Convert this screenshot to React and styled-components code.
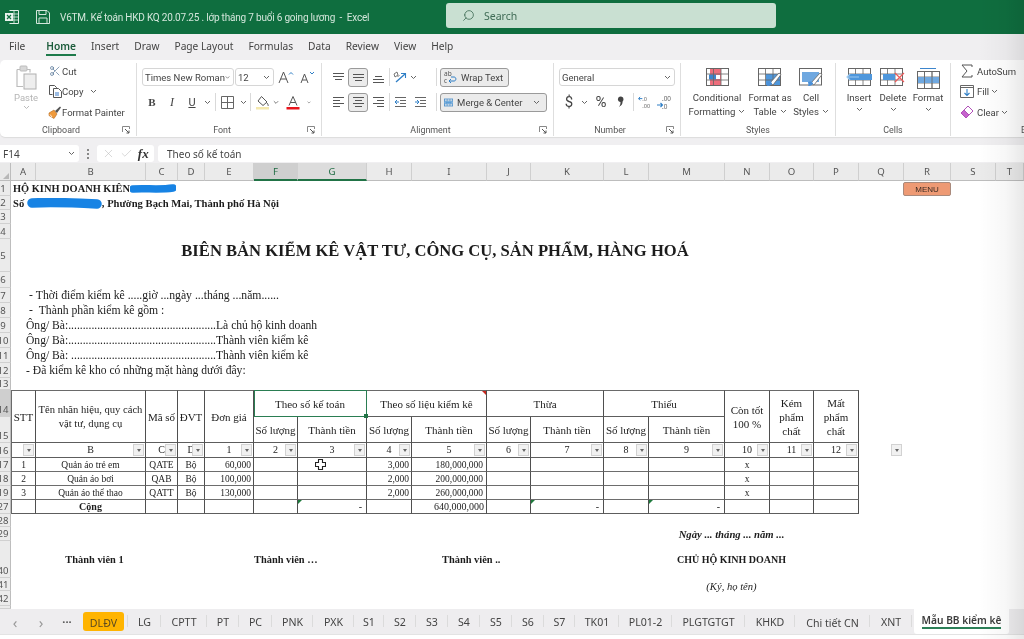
import React from 'react';
import styled, { createGlobalStyle } from 'styled-components';
import { Search, Scissors, X, Check } from 'lucide-react';

const UI = '"Noto Sans", "Open Sans", sans-serif';
const NARROW = 'Roboto, "Noto Sans", sans-serif';
const SERIF = '"Liberation Serif", "Times New Roman", serif';

const Global = createGlobalStyle`
  html, body { margin: 0; padding: 0; background: #fff; }
  * { box-sizing: border-box; }
  body { font-family: ${UI}; color: #333; }
`;

const Window = styled.div`
  position: relative;
  width: 1024px;
  height: 639px;
  overflow: hidden;
  display: flex;
  flex-direction: column;
  background: #f0eff1;
  filter: blur(0.4px);
`;
const EdgeShade = styled.div`
  position: absolute;
  top: 0; right: 0; bottom: 0;
  width: 46px;
  pointer-events: none;
  background: linear-gradient(to right, rgba(0,0,0,0), rgba(0,0,0,.03) 60%, rgba(0,0,0,.09));
`;

/* Title bar */
const TitleBar = styled.header`
  height: 34px;
  flex: none;
  background: #0f6e3f;
  display: flex;
  align-items: center;
  padding-left: 5px;
  color: #d3e6db;
`;
const TitleIcon = styled.div`
  width: ${p => p.$w}px;
  display: flex;
  align-items: center;
`;
const TitleText = styled.div`
  width: 386px;
  font-family: ${NARROW};
  font-size: 10px;
  letter-spacing: -0.2px;
  white-space: pre;
`;
const SearchBox = styled.div`
  width: 330px;
  height: 25px;
  margin-top: -3px;
  background: #c9e0d2;
  border-radius: 3px;
  display: flex;
  align-items: center;
  padding-left: 16px;
  gap: 9px;
  font-size: 10.5px;
  color: #3f6b55;
  svg { transform: scaleX(-1); }
`;

/* Menu */
const MenuBar = styled.nav`
  height: 26px;
  flex: none;
  display: flex;
  align-items: center;
  padding: 0 0 2px 9px;
  font-size: 10.2px;
  color: #444;
`;
const MenuItem = styled.div`
  position: relative;
  margin-right: ${p => p.$gap}px;
  font-weight: ${p => (p.$active ? 600 : 400)};
  color: ${p => (p.$active ? '#1c5c3b' : '#444')};
  ${p => p.$active && `
    &::after {
      content: '';
      position: absolute;
      left: 0; right: 0; bottom: -3px;
      height: 2px;
      background: #1e7a4b;
    }
  `}
`;

/* Ribbon */
const Ribbon = styled.section`
  height: 77px;
  flex: none;
  background: #fff;
  border-radius: 5px 0 0 5px;
  box-shadow: 0 1px 1px #dcdcdc;
  display: flex;
  padding: 3px 0 1px;
  overflow: hidden;
  font-family: ${NARROW};
  font-size: 9.5px;
  color: #444;
`;
const Group = styled.div`
  width: ${p => p.$w}px;
  flex: none;
  display: flex;
  flex-direction: column;
  border-right: ${p => (p.$last ? 'none' : '1px solid #dedede')};
`;
const GroupBody = styled.div`
  flex: 1;
  display: flex;
  padding-left: ${p => p.$pl || 0}px;
  padding-top: 2px;
`;
const GroupFoot = styled.div`
  height: 13px;
  display: flex;
  align-items: center;
  font-size: 8.9px;
  color: #555;
`;
const GroupName = styled.div`
  flex: 1;
  text-align: center;
  padding-left: ${p => p.$pl || 0}px;
  white-space: nowrap;
`;
const Launcher = styled.div`
  width: 14px;
  display: flex;
  align-items: center;
`;

const PasteCol = styled.div`
  width: 48px;
  padding-left: 14px;
  display: flex;
  flex-direction: column;
  align-items: flex-start;
  color: #b5b5b5;
  font-size: 9.5px;
  line-height: 12px;
`;
const PasteLabel = styled.div`
  margin-top: 1px;
  width: 24px;
  text-align: center;
`;
const PasteChev = styled.div`
  width: 24px;
  display: flex;
  justify-content: center;
  margin-top: 1px;
`;
const SmallStack = styled.div`
  display: flex;
  flex-direction: column;
  gap: 8px;
`;
const SmallBtn = styled.div`
  height: 12.5px;
  display: flex;
  align-items: center;
  white-space: nowrap;
  font-size: 9.5px;
  color: #444;
`;
const SmallIcon = styled.span`
  width: ${p => p.$w || 14}px;
  display: inline-flex;
  justify-content: center;
  align-items: center;
  margin-right: ${p => p.$mr || 0}px;
`;
const Stack2 = styled.div`
  display: flex;
  flex-direction: column;
  gap: 7px;
  padding-top: 3px;
`;
const Row = styled.div`
  height: 18px;
  display: flex;
  align-items: center;
`;
const Slot = styled.div`
  width: ${p => p.$w}px;
  height: 19px;
  flex: none;
  display: flex;
  align-items: center;
  justify-content: center;
  font-family: ${p => (p.$serif ? SERIF : 'inherit')};
  font-weight: ${p => (p.$bold ? 700 : 400)};
  font-style: ${p => (p.$it ? 'italic' : 'normal')};
  text-decoration: ${p => (p.$under ? 'underline' : 'none')};
  font-size: ${p => p.$fs || 11}px;
  color: #444;
  ${p => p.$pressed && `
    background: #ebebeb;
    border: 1px solid #9a9a9a;
    border-radius: 3px;
  `}
`;
const Sep = styled.div`
  width: 1px;
  height: 18px;
  flex: none;
  background: #d9d9d9;
  margin: 0 ${p => p.$m || 0}px;
`;
const Combo = styled.div`
  width: ${p => p.$w}px;
  height: 18px;
  flex: none;
  margin-right: 1px;
  background: #fff;
  border: 1px solid #d6d6d6;
  border-radius: 3px;
  display: flex;
  align-items: center;
  justify-content: space-between;
  padding: 0 3px 0 2px;
  font-size: 9.5px;
  color: #444;
  white-space: nowrap;
`;
const ToggleBtn = styled.div`
  width: ${p => p.$w}px;
  height: 19px;
  background: #ebebeb;
  border: 1px solid #9a9a9a;
  border-radius: 3px;
  display: flex;
  align-items: center;
  gap: 4px;
  padding-left: 3px;
  font-size: 9.5px;
  color: #444;
  white-space: nowrap;
`;
const BigBtn = styled.div`
  width: ${p => p.$w}px;
  flex: none;
  display: flex;
  flex-direction: column;
  align-items: center;
  text-align: center;
  font-size: 9.6px;
  line-height: 13px;
  color: #444;
  white-space: nowrap;
  padding-top: 3px;
`;
const BigIcon = styled.div`
  height: 23px;
  display: flex;
  align-items: flex-start;
`;
const BigChev = styled.div`
  height: 11px;
  display: flex;
  align-items: center;
`;
const Chev2 = styled.span`
  display: inline-block;
  margin-left: 3px;
  vertical-align: 1px;
`;

/* Formula bar */
const FormulaBar = styled.div`
  height: 17px;
  flex: none;
  margin: 8px 0 1px;
  display: flex;
  align-items: stretch;
  font-size: 10px;
  color: #444;
`;
const NameBox = styled.div`
  width: 79px;
  background: #fff;
  border-radius: 0 3px 3px 0;
  display: flex;
  align-items: center;
  justify-content: space-between;
  padding: 0 4px 0 3px;
`;
const Dots = styled.div`
  width: 18px;
  display: flex;
  flex-direction: column;
  align-items: center;
  justify-content: center;
  gap: 2px;
  i { width: 2px; height: 2px; background: #888; display: block; }
`;
const FxBox = styled.div`
  width: 57px;
  background: #fff;
  border-radius: 3px;
  display: flex;
  align-items: center;
  justify-content: space-around;
  padding: 0 3px;
  color: #b8b8b8;
  b { font-family: ${SERIF}; font-style: italic; font-size: 13px; color: #333; }
`;
const FormulaInput = styled.div`
  flex: 1;
  margin-left: 4px;
  background: #fff;
  border-radius: 3px 0 0 3px;
  display: flex;
  align-items: center;
  padding-left: 9px;
  font-size: 10px;
`;

/* Sheet */
const COLS = [25,110,32,27,49,44,69,45,75,44,73,45,76,45,44,45,45,47,45,28];
const COLNAMES = 'ABCDEFGHIJKLMNOPQRST'.split('');
const ROWS = [
  [1,15],[2,14],[3,14],[4,15],[5,33],[6,16],[7,15],[8,15],[9,15],[10,15],[11,15],[12,15],[13,12],
  [14,27],[15,26],[16,15],[17,14],[18,14],[19,14],[27,14],[28,13],[29,14],[40,37],[41,13],[42,15],[43,3],
];
const rowLine = r => ROWS.findIndex(x => x[0] === r) + 2;

const Sheet = styled.main`
  height: 446px;
  flex: none;
  display: grid;
  grid-template-columns: 11px ${COLS.map(c => c + 'px').join(' ')};
  grid-template-rows: 18px ${ROWS.map(r => r[1] + 'px').join(' ')};
  background: #fff;
  overflow: hidden;
`;
const Corner = styled.div`
  background: #e9e9e9;
  border-right: 1px solid #bdbdbd;
  border-bottom: 1px solid #bdbdbd;
  position: relative;
  &::after {
    content: '';
    position: absolute;
    right: 1px; bottom: 1px;
    border: 3.5px solid transparent;
    border-right-color: #b8b8b8;
    border-bottom-color: #b8b8b8;
  }
`;
const ColHead = styled.div`
  background: ${p => (p.$sel === 'F' ? '#cfcfcf' : p.$sel ? '#dcdcdc' : '#ebebeb')};
  border-right: 1px solid #cfcfcf;
  border-bottom: ${p => (p.$sel ? '2px solid #217346' : '1px solid #bdbdbd')};
  display: flex;
  align-items: center;
  justify-content: center;
  font-size: 9.6px;
  color: ${p => (p.$sel ? '#1e6b42' : '#555')};
`;
const RowHead = styled.div`
  grid-column: 1;
  grid-row: ${p => rowLine(p.$r)};
  background: ${p => (p.$sel ? '#cfcfcf' : '#ebebeb')};
  border-right: 1px solid #bdbdbd;
  border-bottom: 1px solid #d0d0d0;
  display: flex;
  align-items: ${p => (p.$bot ? 'flex-end' : 'center')};
  justify-content: center;
  overflow: hidden;
  padding-right: 4px;
  font-size: 9.6px;
  line-height: 13px;
  color: #555;
`;
const Cell = styled.div`
  grid-column: ${p => p.$c + 1} / span ${p => p.$cs || 1};
  grid-row: ${p => rowLine(p.$r)} / span ${p => p.$rs || 1};
  display: flex;
  align-items: ${p => p.$a || 'center'};
  justify-content: ${p => p.$j || 'flex-start'};
  padding-left: ${p => p.$pl || 0}px;
  padding-top: ${p => p.$pt || 0}px;
  padding-bottom: ${p => p.$pb || 0}px;
  white-space: nowrap;
  font-family: ${SERIF};
  font-size: ${p => p.$fs || 11}px;
  font-weight: ${p => (p.$b ? 700 : 400)};
  font-style: ${p => (p.$it ? 'italic' : 'normal')};
  color: #1c1c1c;
`;
const Sketch = styled.svg`
  display: inline-block;
  flex: none;
`;
const MenuButton = styled.div`
  grid-column: 19;
  grid-row: ${() => rowLine(1)};
  background: #ee9a74;
  border: 1px solid #a98a7c;
  border-radius: 2px;
  display: flex;
  align-items: center;
  justify-content: center;
  font-family: "Liberation Sans", sans-serif;
  font-size: 8px;
  color: #3a2a22;
  margin: 1px 0 0 -1px;
`;
const T = styled(Cell)`
  position: relative;
  text-align: center;
  line-height: 14px;
  padding-right: ${p => p.$pr || 0}px;
  border-right: 1px solid #4f4f4f;
  border-bottom: 1px solid ${p => p.$hb || '#5d5d5d'};
  ${p => p.$top && 'border-top: 1px solid #6a6a6a;'}
  ${p => p.$left && 'border-left: 1px solid #6a6a6a;'}
  ${p => p.$sel && `
    outline: 1.5px solid #2a7d52;
    outline-offset: -1px;
    z-index: 2;
    &::after {
      content: '';
      position: absolute;
      right: -2px; bottom: -2px;
      width: 4px; height: 4px;
      background: #217346;
    }
  `}
  ${p => p.$green && `
    &::before {
      content: '';
      position: absolute;
      left: 0; top: 0;
      border: 2.5px solid transparent;
      border-left-color: #1e7a3c;
      border-top-color: #1e7a3c;
    }
  `}
  ${p => p.$red && `
    &::before {
      content: '';
      position: absolute;
      right: 0; top: 0;
      border: 2.5px solid transparent;
      border-right-color: #c8281e;
      border-top-color: #c8281e;
    }
  `}
`;
const HeadLines = styled.div`
  font-size: ${p => p.$fs || 11}px;
`;
const FilterBtn = styled.span`
  position: absolute;
  right: ${p => p.$r || 1}px;
  top: 1px;
  width: 11px;
  height: 12px;
  background: #f1f1f1;
  border: 1px solid #d2d2d2;
  display: flex;
  align-items: center;
  justify-content: center;
  &::after {
    content: '';
    border: 2px solid transparent;
    border-top: 3px solid #666;
    border-bottom: 0;
  }
`;
const LooseFilter = styled(Cell)`
  position: relative;
`;

/* Tabs */
const TabBar = styled.footer`
  height: 26px;
  flex: none;
  display: flex;
  align-items: stretch;
  font-size: 10.6px;
  color: #444;
  background: #eeedef;
  border-bottom: 1px solid #e3e3e3;
`;
const TabNav = styled.div`
  width: 83px;
  display: flex;
  align-items: center;
  padding-left: 2px;
  color: #888;
`;
const NavSlot = styled.div`
  width: 26px;
  display: flex;
  justify-content: center;
  font-size: ${p => p.$fs || 15}px;
  line-height: 14px;
  font-weight: ${p => (p.$b ? 700 : 400)};
  color: ${p => p.$c || '#999'};
`;
const Tab = styled.div`
  width: ${p => p.$w}px;
  flex: none;
  display: flex;
  align-items: center;
  justify-content: center;
  position: relative;
  white-space: nowrap;
  padding-top: ${p => (p.$drop ? 3 : 1)}px;
  &::after {
    content: '';
    position: absolute;
    right: 0; top: 6px; bottom: 7px;
    width: 1px;
    background: #dbdbdb;
  }
`;
const OrangeTab = styled.div`
  width: 45px;
  flex: none;
  display: flex;
  align-items: center;
  position: relative;
  &::after {
    content: '';
    position: absolute;
    right: 0; top: 6px; bottom: 7px;
    width: 1px;
    background: #dbdbdb;
  }
`;
const OrangePill = styled.div`
  width: 41px;
  height: 19px;
  margin-top: -1px;
  background: #ffb400;
  border-radius: 3px;
  display: flex;
  align-items: flex-end;
  justify-content: center;
  padding-bottom: 1px;
  color: #5b4a20;
`;
const ActiveTab = styled.div`
  width: 95px;
  margin-left: 2px;
  flex: none;
  background: #fff;
  display: flex;
  align-items: center;
  justify-content: center;
  border-radius: 0 0 3px 3px;
  font-weight: 600;
  font-size: 10.2px;
  color: #3c3c3c;
`;
const ActiveLabel = styled.span`
  border-bottom: 2px solid #2c8058;
  line-height: 13px;
`;
const BottomEdge = styled.div`
  flex: 1;
  background: #fff;
`;

/* Icon pieces */
const Chev = ({ c = '#666' }) => (
  <svg width="7" height="5" viewBox="0 0 7 5"><path d="M1 1l2.5 2.5L6 1" fill="none" stroke={c} strokeWidth="1" /></svg>
);
const Lines = ({ w }) => (
  <svg width="13" height="13" viewBox="0 0 13 13">
    {w.map(([x1, x2, y], i) => <path key={i} d={`M${x1} ${y}H${x2}`} stroke="#555" strokeWidth="1" />)}
  </svg>
);
const VTop = () => <Lines w={[[1,12,2.5],[1,12,5.5],[3,10,8.5]]} />;
const VMid = () => <Lines w={[[1,12,3.5],[1,12,6.5],[3,10,9.5]]} />;
const VBot = () => <Lines w={[[3,10,5.5],[1,12,8.5],[1,12,11.5]]} />;
const HLeft = () => <Lines w={[[1,12,1.5],[1,8,4.5],[1,12,7.5],[1,8,10.5]]} />;
const HCenter = () => <Lines w={[[1,12,1.5],[3,10,4.5],[1,12,7.5],[3,10,10.5]]} />;
const HRight = () => <Lines w={[[1,12,1.5],[5,12,4.5],[1,12,7.5],[5,12,10.5]]} />;
const Launch = () => (
  <svg width="8" height="8" viewBox="0 0 8 8"><path d="M.5 6V.5H7.5V3" fill="none" stroke="#888" strokeWidth="1" /><path d="M3 3l4 4M7 4.5V7H4.5" fill="none" stroke="#555" strokeWidth="1" /></svg>
);
const ExcelLogo = () => (
  <svg width="14" height="16" viewBox="0 0 14 16">
    <path d="M4.5 1.5h9v13h-9" fill="none" stroke="#e2efe8" strokeWidth="1" />
    <path d="M9 1.5v13M4.5 5h9M4.5 8h9M4.5 11h9" stroke="#e2efe8" strokeWidth=".8" />
    <rect x="0" y="4" width="8" height="8" fill="#e9f3ee" />
    <path d="M2 6l4 4M6 6l-4 4" stroke="#0f6e3f" strokeWidth="1.2" />
  </svg>
);
const SaveIcon = () => (
  <svg width="14" height="14" viewBox="0 0 14 14" fill="none" stroke="#d3e6db" strokeWidth="1">
    <path d="M.5.5h10.5l2.5 2.5v10.5H.5z" /><path d="M3 .5v4h7v-4M3 13.5V8h8v5.5" />
  </svg>
);
const PasteIcon = () => (
  <svg width="24" height="26" viewBox="0 0 24 26" fill="none">
    <path d="M3 4.500h3M13 4.500h3v3M3 4.500v17h6" stroke="#bcbcbc" strokeWidth="1.2" />
    <rect x="6" y="1" width="7" height="5" rx="1" fill="#d8d8d8" stroke="#bcbcbc" />
    <rect x="10" y="9" width="12" height="15" fill="#eee" stroke="#b0b0b0" />
  </svg>
);
const CopyIcon = () => (
  <svg width="13" height="13" viewBox="0 0 13 13" fill="none" stroke="#555">
    <path d="M.5.5h5l2 2v1M.5.5v9h3" /><path d="M4.500 3.500h5l3 3v6h-8z" fill="#fff" />
    <path d="M6 8h4M6 10h4" stroke="#3a7bc8" />
  </svg>
);
const PainterIcon = () => (
  <svg width="14" height="14" viewBox="0 0 14 14">
    <path d="M1 8l5-3 3 4-3 4.500-5-3z" fill="#ef9a3c" stroke="#b56a1d" strokeWidth=".6" />
    <path d="M7 6l5-4.500 1 1L9 8" fill="#555" />
    <path d="M2 9.500l2 2.500" stroke="#fff" strokeWidth=".8" />
  </svg>
);
const BigA = ({ dir, size }) => (
  <svg width="16" height="14" viewBox="0 0 16 14">
    <path d={size ? 'M1 13L5.500 2 10 13M2.600 9h5.800' : 'M2 13L5.500 4 9 13M3.200 10h4.600'} fill="none" stroke="#555" strokeWidth="1" />
    <path d={dir === 'up' ? 'M11 4.500l2-2 2 2' : 'M11 2l2 2 2-2'} fill="none" stroke="#2f7fc6" strokeWidth="1" />
  </svg>
);
const BorderIcon = () => (
  <svg width="13" height="13" viewBox="0 0 13 13" fill="none" stroke="#666"><path d="M.5.5h12v12H.5zM6.500.5v12M.5 6.500h12" /></svg>
);
const FillIcon = () => (
  <svg width="13" height="15" viewBox="0 0 13 15">
    <path d="M5.500 1.500L11 7l-4 3.500L2 6z" fill="#fff" stroke="#555" />
    <path d="M11 8c1 1.500 1.500 2.200 1 3" stroke="#555" fill="none" />
    <rect x="0" y="12" width="13" height="2.500" fill="#f4e8ad" />
  </svg>
);
const ColorA = () => (
  <svg width="14" height="15" viewBox="0 0 14 15">
    <path d="M3 10.500L7 1.500l4 9M4.300 7.500h5.400" fill="none" stroke="#555" strokeWidth="1" />
    <rect x="0.500" y="12" width="13" height="2.500" fill="#e8141c" />
  </svg>
);
const OrientIcon = () => (
  <svg width="14" height="14" viewBox="0 0 14 14" fill="none">
    <path d="M1 4l3-2 1 3-3 2zM4.500 7l2-2" stroke="#666" strokeWidth=".9" />
    <path d="M3 12L12 4" stroke="#2f7fc6" strokeWidth="1.300" />
    <path d="M8 3.500h4.500V8" stroke="#2f7fc6" strokeWidth="1.100" />
  </svg>
);
const IndentIcon = ({ rev }) => (
  <svg width="13" height="12" viewBox="0 0 13 12" fill="none">
    <path d="M1 1.500h11M6 4.500h6M6 7.500h6M1 10.500h11" stroke="#666" />
    <path d={rev ? 'M5 6H1M3 4L1 6l2 2' : 'M1 6h4M3 4l2 2-2 2'} stroke="#2f7fc6" />
  </svg>
);
const WrapIcon = () => (
  <svg width="13" height="14" viewBox="0 0 13 14">
    <text x="0" y="6" fontSize="6.5" fontFamily="Noto Sans" fill="#555">ab</text>
    <text x="0" y="13" fontSize="6.5" fontFamily="Noto Sans" fill="#555">c</text>
    <path d="M5 11h5c2.500 0 2.500-4 0-4H7" fill="none" stroke="#2f7fc6" strokeWidth="1" />
    <path d="M7 9l-2 2 2 2" fill="none" stroke="#2f7fc6" strokeWidth="1" />
  </svg>
);
const MergeIcon = () => (
  <svg width="13" height="13" viewBox="0 0 13 13" fill="none">
    <rect x=".5" y="1.500" width="12" height="10" stroke="#2f7fc6" />
    <rect x="1" y="4.500" width="11" height="4" fill="#9cc6ea" />
    <path d="M3 6.500h7M3.500 5.500l-1 1 1 1M9.500 5.500l1 1-1 1M.5 4.500h12M.5 8.500h12M4.500 1.500v3M8.500 1.500v3M4.500 8.500v3M8.500 8.500v3" stroke="#2f7fc6" strokeWidth=".8" />
  </svg>
);
const DecIcon = ({ more }) => (
  <svg width="15" height="15" viewBox="0 0 15 15">
    <text x="5" y="6" fontSize="6.4" fontFamily="Noto Sans" fill="#666">{more ? '.00' : '.0'}</text>
    <text x="5" y="13.5" fontSize="6.4" fontFamily="Noto Sans" fill="#666">{more ? '.0' : '.00'}</text>
    <path d={more ? 'M0 10h5M3.500 8l2 2-2 2' : 'M5 3H1M2.500 1L.5 3l2 2'} fill="none" stroke="#2f7fc6" strokeWidth="1.100" />
  </svg>
);
const CommaIcon = () => (
  <svg width="8" height="12" viewBox="0 0 8 12">
    <circle cx="3.700" cy="3.200" r="2.700" fill="#444" />
    <path d="M4.800 3.500c1.700 2.500.5 6-3 7.500 1.500-1.700 2-3.500 1.500-6z" fill="#444" />
  </svg>
);
const Frame = ({ children, w = 23, h = 18 }) => (
  <svg width={w} height={h} viewBox={`0 0 ${w} ${h}`} fill="none">{children}</svg>
);
const GridLines = ({ x = 0, y = 0, w = 22, h = 17, c = '#666' }) => (
  <>
    <rect x={x + .5} y={y + .5} width={w} height={h} stroke={c} />
    <path d={`M${x + 7.5} ${y}v${h}M${x + 15} ${y}v${h}M${x} ${y + 6}h${w}M${x} ${y + 12}h${w}`} stroke={c} strokeWidth=".8" />
  </>
);
const Brush = () => (
  <g>
    <path d="M12 15l9-10 2 1.500-8 10.500z" fill="#fff" stroke="#666" strokeWidth=".8" />
    <path d="M9 14c2-1 4-.5 5 1 .5 1.500-2 3-5 3 1-1 0-3 0-4z" fill="#4a90d9" />
  </g>
);
const CondIcon = () => (
  <Frame><rect x="4" y="0" width="11" height="17" fill="#ee6e7c" /><rect x="8" y="7" width="6" height="4" fill="#fff" /><rect x="3" y="6.500" width="7" height="5" fill="#3d85cc" /><GridLines /></Frame>
);
const TableIcon = () => (
  <Frame w={25}><path d="M8 6h14.500v11H8z" fill="#4f97dc" /><GridLines /><Brush /></Frame>
);
const StylesIcon = () => (
  <Frame w={25}><rect x=".5" y=".5" width="22" height="16.500" stroke="#666" /><rect x="3" y="4" width="17" height="10" fill="#6fa8e0" /><Brush /></Frame>
);
const InsertIcon = () => (
  <Frame w={26}><GridLines x={2} /><rect x="3" y="6" width="23" height="6" fill="#4f97dc" /><path d="M1 9h12M4 6L1 9l3 3" stroke="#9ccaf2" strokeWidth="1.200" /></Frame>
);
const DeleteIcon = () => (
  <Frame w={26}><GridLines /><rect x="3" y="6" width="12" height="6" fill="#4f97dc" /><path d="M15 5l9 9M24 5l-9 9" stroke="#ee5a5a" strokeWidth="1.200" /></Frame>
);
const FormatIcon = () => (
  <Frame h={21}><path d="M3 .5h16" stroke="#3d85cc" strokeWidth="1.200" /><GridLines y={3} /><rect x="1" y="9" width="21" height="6" fill="#6fa8e0" /><path d="M7.500 3v17M15 3v17" stroke="#666" strokeWidth=".8" /></Frame>
);
const SigmaIcon = () => (
  <svg width="12" height="14" viewBox="0 0 12 14" fill="none"><path d="M11 3V1H1l5 6-5 6h10v-2" stroke="#555" strokeWidth="1" /></svg>
);
const FillDown = () => (
  <svg width="14" height="13" viewBox="0 0 14 13" fill="none">
    <path d="M.5.5h13v12H.5z" stroke="#666" /><path d="M.5 2.500h13" stroke="#666" />
    <path d="M7 4v6M4.500 8L7 10.500 9.500 8" stroke="#2f7fc6" strokeWidth="1.100" />
  </svg>
);
const EraserIcon = () => (
  <svg width="14" height="14" viewBox="0 0 14 14">
    <path d="M8 1l5 5-4 4-5-5z" fill="#fff" stroke="#b14fb9" />
    <path d="M4 5l5 5-3 3-5-5z" fill="#c563cc" stroke="#b14fb9" />
  </svg>
);
const CrossCursor = () => (
  <svg width="11" height="11" viewBox="0 0 11 11">
    <path d="M3.500.5h4v3h3v4h-3v3h-4v-3h-3v-4h3z" fill="#fff" stroke="#222" strokeWidth="1.100" />
  </svg>
);
const Scribble = ({ w, h, d }) => (
  <Sketch width={w} height={h} viewBox={`0 0 ${w} ${h}`}>
    <path d={d} fill="none" stroke="#1783e4" strokeWidth={h - 1.5} strokeLinecap="round" strokeLinejoin="round" />
  </Sketch>
);

/* Data */
const MENU = [['File',21],['Home',15],['Insert',15],['Draw',15],['Page Layout',15],['Formulas',15],['Data',15],['Review',15],['View',15],['Help',0]];
const TABS = [['LG',33],['CPTT',46],['PT',32],['PC',33],['PNK',41],['PXK',41],['S1',30],['S2',32],['S3',32],['S4',32],['S5',32],['S6',32],['S7',31],['TK01',44],['PL01-2',53],['PLGTGTGT',73],['KHKD',50],['Chi tiết CN',75,true],['XNT',42]];
const DATA = [
  [17,'1','Quản áo trẻ em','QATE','60,000','3,000','180,000,000'],
  [18,'2','Quản áo bơi','QAB','100,000','2,000','200,000,000'],
  [19,'3','Quản áo thể thao','QATT','130,000','2,000','260,000,000'],
];
const FILTER = ['', 'B', 'C', 'D', '1', '2', '3', '4', '5', '6', '7', '8', '9', '10', '11', '12'];
const DOTS = '.'.repeat(51);

const Body = () => (
  <>
    {DATA.map(([r, stt, name, code, price, qty, total]) => {
      const hb = '#6d6d6d';
      return (
        <React.Fragment key={r}>
          <T $c={1} $r={r} $left $fs={9.5} $j="center" $hb={hb}>{stt}</T>
          <T $c={2} $r={r} $fs={9.5} $j="center" $hb={hb}>{name}</T>
          <T $c={3} $r={r} $fs={9.5} $j="center" $hb={hb}>{code}</T>
          <T $c={4} $r={r} $fs={9.5} $j="center" $hb={hb}>Bộ</T>
          <T $c={5} $r={r} $fs={9.5} $j="flex-end" $pr={2} $hb={hb}>{price}</T>
          <T $c={6} $r={r} $hb={hb} />
          <T $c={7} $r={r} $pl={17} $hb={hb}>{r === 17 && <CrossCursor />}</T>
          <T $c={8} $r={r} $fs={9.5} $j="flex-end" $pr={2} $hb={hb}>{qty}</T>
          <T $c={9} $r={r} $fs={9.5} $j="flex-end" $pr={3} $hb={hb}>{total}</T>
          {[10, 11, 12, 13].map(c => <T key={c} $c={c} $r={r} $hb={hb} />)}
          <T $c={14} $r={r} $fs={9.5} $j="center" $hb={hb}>x</T>
          <T $c={15} $r={r} $hb={hb} />
          <T $c={16} $r={r} $hb={hb} />
        </React.Fragment>
      );
    })}
  </>
);

export default function App() {
  return (
    <>
      <Global />
      <Window>
        <TitleBar>
          <TitleIcon $w={31}><ExcelLogo /></TitleIcon>
          <TitleIcon $w={24}><SaveIcon /></TitleIcon>
          <TitleText>{'V6TM. Kế toán HKD KQ 20.07.25 . lớp tháng 7 buổi 6 going lương  -  Excel'}</TitleText>
          <SearchBox><Search size={13} strokeWidth={1.5} />Search</SearchBox>
        </TitleBar>

        <MenuBar>
          {MENU.map(([m, g]) => <MenuItem key={m} $gap={g} $active={m === 'Home'}>{m}</MenuItem>)}
        </MenuBar>

        <Ribbon>
          <Group $w={137}>
            <GroupBody>
              <PasteCol>
                <PasteIcon />
                <PasteLabel>Paste</PasteLabel>
                <PasteChev><Chev c="#bbb" /></PasteChev>
              </PasteCol>
              <SmallStack>
                <SmallBtn><SmallIcon $mr={0}><Scissors size={12} strokeWidth={1.2} color="#3a5f86" /></SmallIcon>Cut</SmallBtn>
                <SmallBtn><SmallIcon $mr={0}><CopyIcon /></SmallIcon>Copy<SmallIcon $w={20}><Chev /></SmallIcon></SmallBtn>
                <SmallBtn><SmallIcon $mr={0}><PainterIcon /></SmallIcon>Format Painter</SmallBtn>
              </SmallStack>
            </GroupBody>
            <GroupFoot><GroupName>Clipboard</GroupName><Launcher><Launch /></Launcher></GroupFoot>
          </Group>

          <Group $w={185}>
            <GroupBody $pl={5}>
              <Stack2>
                <Row>
                  <Combo $w={92}>Times New Roman<Chev /></Combo>
                  <Combo $w={39}>12<Chev /></Combo>
                  <Slot $w={21}><BigA dir="up" size /></Slot>
                  <Slot $w={21}><BigA dir="down" /></Slot>
                </Row>
                <Row>
                  <Slot $w={20} $bold $serif $fs={11}>B</Slot>
                  <Slot $w={20} $it $serif $fs={12}>I</Slot>
                  <Slot $w={20} $fs={11} $under>U</Slot>
                  <Slot $w={10}><Chev /></Slot>
                  <Sep $m={3} />
                  <Slot $w={17}><BorderIcon /></Slot>
                  <Slot $w={14}><Chev /></Slot>
                  <Sep />
                  <Slot $w={22}><FillIcon /></Slot>
                  <Slot $w={6}><Chev /></Slot>
                  <Slot $w={28}><ColorA /></Slot>
                  <Slot $w={4}><Chev /></Slot>
                </Row>
              </Stack2>
            </GroupBody>
            <GroupFoot><GroupName>Font</GroupName><Launcher><Launch /></Launcher></GroupFoot>
          </Group>

          <Group $w={232}>
            <GroupBody $pl={6}>
              <Stack2>
                <Row>
                  <Slot $w={20}><VTop /></Slot>
                  <Slot $w={20} $pressed><VMid /></Slot>
                  <Slot $w={21}><VBot /></Slot>
                  <Sep />
                  <Slot $w={19}><OrientIcon /></Slot>
                  <Slot $w={9}><Chev /></Slot>
                  <Slot $w={18} />
                  <Sep />
                  <Slot $w={3} />
                  <ToggleBtn $w={69}><WrapIcon />Wrap Text</ToggleBtn>
                </Row>
                <Row>
                  <Slot $w={20}><HLeft /></Slot>
                  <Slot $w={20} $pressed><HCenter /></Slot>
                  <Slot $w={21}><HRight /></Slot>
                  <Sep />
                  <Slot $w={20}><IndentIcon rev /></Slot>
                  <Slot $w={20}><IndentIcon /></Slot>
                  <Slot $w={6} />
                  <Sep />
                  <Slot $w={3} />
                  <ToggleBtn $w={107}><MergeIcon />Merge &amp; Center<SmallIcon $w={28}><Chev /></SmallIcon></ToggleBtn>
                </Row>
              </Stack2>
            </GroupBody>
            <GroupFoot><GroupName>Alignment</GroupName><Launcher><Launch /></Launcher></GroupFoot>
          </Group>

          <Group $w={127}>
            <GroupBody $pl={5}>
              <Stack2>
                <Row><Combo $w={116}>General<Chev /></Combo></Row>
                <Row>
                  <Slot $w={20} $fs={15}>$</Slot>
                  <Slot $w={10}><Chev /></Slot>
                  <Slot $w={24} $fs={15}>%</Slot>
                  <Slot $w={16}><CommaIcon /></Slot>
                  <Sep $m={4} />
                  <Slot $w={13}><DecIcon /></Slot>
                  <Slot $w={26}><DecIcon more /></Slot>
                </Row>
              </Stack2>
            </GroupBody>
            <GroupFoot><GroupName>Number</GroupName><Launcher><Launch /></Launcher></GroupFoot>
          </Group>

          <Group $w={155}>
            <GroupBody $pl={6}>
              <BigBtn $w={60}><BigIcon><CondIcon /></BigIcon>Conditional<span>Formatting<Chev2><Chev /></Chev2></span></BigBtn>
              <BigBtn $w={46}><BigIcon><TableIcon /></BigIcon>Format as<span>Table<Chev2><Chev /></Chev2></span></BigBtn>
              <BigBtn $w={36}><BigIcon><StylesIcon /></BigIcon>Cell<span>Styles<Chev2><Chev /></Chev2></span></BigBtn>
            </GroupBody>
            <GroupFoot><GroupName>Styles</GroupName></GroupFoot>
          </Group>

          <Group $w={115}>
            <GroupBody $pl={6}>
              <BigBtn $w={34}><BigIcon><InsertIcon /></BigIcon>Insert<BigChev><Chev /></BigChev></BigBtn>
              <BigBtn $w={34}><BigIcon><DeleteIcon /></BigIcon>Delete<BigChev><Chev /></BigChev></BigBtn>
              <BigBtn $w={36}><BigIcon><FormatIcon /></BigIcon>Format<BigChev><Chev /></BigChev></BigBtn>
            </GroupBody>
            <GroupFoot><GroupName>Cells</GroupName></GroupFoot>
          </Group>

          <Group $w={73} $last>
            <GroupBody $pl={9}>
              <SmallStack>
                <SmallBtn><SmallIcon $w={14} $mr={3}><SigmaIcon /></SmallIcon>AutoSum</SmallBtn>
                <SmallBtn><SmallIcon $w={14} $mr={3}><FillDown /></SmallIcon>Fill<SmallIcon $w={11}><Chev /></SmallIcon></SmallBtn>
                <SmallBtn><SmallIcon $w={14} $mr={3}><EraserIcon /></SmallIcon>Clear<SmallIcon $w={11}><Chev /></SmallIcon></SmallBtn>
              </SmallStack>
            </GroupBody>
            <GroupFoot><GroupName $pl={70}>Editing</GroupName></GroupFoot>
          </Group>
        </Ribbon>

        <FormulaBar>
          <NameBox>F14<Chev /></NameBox>
          <Dots><i /><i /><i /></Dots>
          <FxBox><X size={13} strokeWidth={1} /><Check size={13} strokeWidth={1} /><b>fx</b></FxBox>
          <FormulaInput>Theo số kế toán</FormulaInput>
        </FormulaBar>

        <Sheet>
          <Corner />
          {COLNAMES.map(n => <ColHead key={n} $sel={n === 'F' ? 'F' : n === 'G' ? 'G' : undefined}>{n}</ColHead>)}
          {ROWS.map(([r]) => (
            <RowHead key={r} $r={r} $sel={r === 14} $bot={r === 14 || r === 15 || r === 40}>{r === 43 ? '' : r}</RowHead>
          ))}

          <Cell $c={1} $r={1} $b $fs={10.4} $pl={2}>
            HỘ KINH DOANH KIÊN
            <Scribble w={46} h={9} d="M3 5c12-1 26 1 40-1" />
          </Cell>
          <Cell $c={1} $r={2} $b $fs={10.6} $pl={2}>
            Số&nbsp;
            <Scribble w={75} h={11} d="M5 5c20-1 46 0 65 1" />
            , Phường Bạch Mai, Thành phố Hà Nội
          </Cell>
          <MenuButton>MENU</MenuButton>

          <Cell $c={1} $cs={16} $r={5} $b $fs={16.6} $j="center" $pb={10}>BIÊN BẢN KIỂM KÊ VẬT TƯ, CÔNG CỤ, SẢN PHẨM, HÀNG HOÁ</Cell>

          <Cell $c={1} $r={7} $pl={18} $fs={11.7} $pb={1}>-&nbsp;Thời điểm kiểm kê .....giờ ...ngày ...tháng ...năm......</Cell>
          <Cell $c={1} $r={8} $pl={18} $fs={11.7} $pb={1}>-&nbsp;&nbsp;Thành phần kiểm kê gồm :</Cell>
          <Cell $c={1} $r={9} $pl={15} $fs={11.6} $pb={1}>Ông/ Bà:{DOTS}Là chủ hộ kinh doanh</Cell>
          <Cell $c={1} $r={10} $pl={15} $fs={11.6} $pb={1}>Ông/ Bà:{DOTS}Thành viên kiểm kê</Cell>
          <Cell $c={1} $r={11} $pl={15} $fs={11.6} $pb={1}>Ông/ Bà: {DOTS.slice(1)}Thành viên kiểm kê</Cell>
          <Cell $c={1} $r={12} $pl={15} $fs={11.6} $pb={1}>- Đã kiểm kê kho có những mặt hàng dưới đây:</Cell>

          <T $c={1} $r={14} $rs={2} $top $left $j="center">STT</T>
          <T $c={2} $r={14} $rs={2} $top $j="center" $a="flex-start" $pt={12}>
            <HeadLines $fs={10.6}>Tên nhãn hiệu, quy cách<br />vật tư, dụng cụ</HeadLines>
          </T>
          <T $c={3} $r={14} $rs={2} $top $j="center">Mã số</T>
          <T $c={4} $r={14} $rs={2} $top $j="center">ĐVT</T>
          <T $c={5} $r={14} $rs={2} $top $j="center">Đơn giá</T>
          <T $c={6} $cs={2} $r={14} $top $j="center" $sel>Theo số kế toán</T>
          <T $c={8} $cs={2} $r={14} $top $j="center" $red>Theo số liệu kiểm kê</T>
          <T $c={10} $cs={2} $r={14} $top $j="center">Thừa</T>
          <T $c={12} $cs={2} $r={14} $top $j="center">Thiếu</T>
          <T $c={14} $r={14} $rs={2} $top $j="center"><HeadLines>Còn tốt<br />100 %</HeadLines></T>
          <T $c={15} $r={14} $rs={2} $top $j="center"><HeadLines>Kém<br />phẩm<br />chất</HeadLines></T>
          <T $c={16} $r={14} $rs={2} $top $j="center"><HeadLines>Mất<br />phẩm<br />chất</HeadLines></T>

          {[6, 8, 10, 12].map(c => (
            <React.Fragment key={c}>
              <T $c={c} $r={15} $j="center">Số lượng</T>
              <T $c={c + 1} $r={15} $j="center">Thành tiền</T>
            </React.Fragment>
          ))}

          {FILTER.map((l, i) => (
            <T key={i} $c={i + 1} $r={16} $left={i === 0} $j="center" $fs={10}>
              {l}
              <FilterBtn />
            </T>
          ))}

          <LooseFilter $c={17} $r={16}><FilterBtn $r={2} /></LooseFilter>

          <Body />

          <T $c={1} $r={27} $left />
          <T $c={2} $r={27} $j="center" $b $fs={10}>Cộng</T>
          {[3, 4, 5, 6].map(c => <T key={c} $c={c} $r={27} />)}
          <T $c={7} $r={27} $j="flex-end" $pr={4} $green $fs={10}>-</T>
          <T $c={8} $r={27} />
          <T $c={9} $r={27} $j="flex-end" $pr={2} $fs={10}>640,000,000</T>
          <T $c={10} $r={27} />
          <T $c={11} $r={27} $j="flex-end" $pr={4} $green $fs={10}>-</T>
          <T $c={12} $r={27} />
          <T $c={13} $r={27} $j="flex-end" $pr={4} $green $fs={10}>-</T>
          {[14, 15, 16].map(c => <T key={c} $c={c} $r={27} />)}

          <Cell $c={12} $cs={5} $r={29} $b $it $fs={10.7} $j="center">Ngày ... tháng ... năm ...</Cell>
          <Cell $c={1} $cs={3} $r={40} $b $fs={10.4} $j="center">Thành viên 1</Cell>
          <Cell $c={6} $cs={3} $r={40} $b $fs={10.4}>Thành viên …</Cell>
          <Cell $c={9} $cs={2} $r={40} $b $fs={10.4} $pl={30}>Thành viên ..</Cell>
          <Cell $c={12} $cs={5} $r={40} $b $fs={10} $j="center">CHỦ HỘ KINH DOANH</Cell>
          <Cell $c={12} $cs={5} $r={41} $it $fs={10.6} $j="center" $pt={3}>(Ký, họ tên)</Cell>
        </Sheet>

        <TabBar>
          <TabNav>
            <NavSlot>‹</NavSlot>
            <NavSlot>›</NavSlot>
            <NavSlot $b $c="#555" $fs={11}>···</NavSlot>
          </TabNav>
          <OrangeTab><OrangePill>DLĐV</OrangePill></OrangeTab>
          {TABS.map(([t, w, d]) => <Tab key={t} $w={w} $drop={d}>{t}</Tab>)}
          <ActiveTab><ActiveLabel>Mẫu BB kiểm kê</ActiveLabel></ActiveTab>
        </TabBar>
        <BottomEdge />
        <EdgeShade />
      </Window>
    </>
  );
}
